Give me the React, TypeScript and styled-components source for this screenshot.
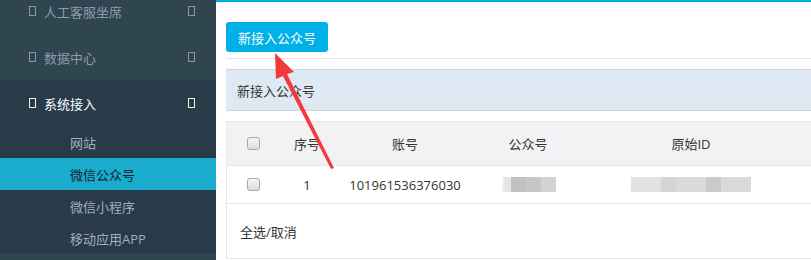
import React from 'react'
import styled, { createGlobalStyle } from 'styled-components'

const GlobalStyle = createGlobalStyle`
  html, body {
    margin: 0;
    padding: 0;
    background: #fff;
    overflow: hidden;
  }
  body {
    font-family: "Open Sans", "Noto Sans CJK SC", sans-serif;
    font-size: 13px;
    color: #333;
  }
`

const Layout = styled.div`
  display: flex;
  width: 811px;
  height: 260px;
  overflow: hidden;
  position: relative;
`

const Sidebar = styled.div`
  width: 216px;
  flex: none;
  background: #2f4550;
  overflow: hidden;
`

const Menu = styled.div`
  margin-top: -12px;
  display: flex;
  flex-direction: column;
`

const MenuItem = styled.div<{ $active?: boolean }>`
  height: 46px;
  display: flex;
  align-items: center;
  padding: 0 21px 0 29px;
  color: ${(p) => (p.$active ? '#ffffff' : '#8c9dab')};
  background: ${(p) => (p.$active ? '#293a48' : 'transparent')};
  font-size: 13px;
`

const Tofu = styled.span<{ $active?: boolean }>`
  display: inline-block;
  width: 5px;
  height: 8px;
  border: 1px solid ${(p) => (p.$active ? '#f2f2e0' : '#8a99a3')};
  flex: none;
`

const MenuLabel = styled.span`
  flex: 1;
  margin-left: 8px;
`

const SubMenu = styled.div`
  background: #293a48;
  display: flex;
  flex-direction: column;
  flex: 1;
`

const SubItem = styled.div<{ $selected?: boolean }>`
  height: 32px;
  display: flex;
  align-items: center;
  padding-left: 70px;
  font-size: 13px;
  color: ${(p) => (p.$selected ? '#0e2630' : '#a3afb9')};
  background: ${(p) => (p.$selected ? '#1babcd' : 'transparent')};
`

const Main = styled.div`
  flex: 1;
  border-top: 2px solid #00aee6;
  padding: 20px 0 0 10px;
  display: flex;
  flex-direction: column;
`

const Toolbar = styled.div`
  padding-bottom: 6px;
  border-bottom: 1px solid #e5e5e5;
`

const PrimaryButton = styled.button`
  height: 30px;
  width: 102px;
  border: none;
  border-radius: 3px;
  background: #00b1e8;
  color: #fff;
  font-family: inherit;
  font-size: 13px;
  padding: 0;
  cursor: pointer;
`

const PanelHeader = styled.div`
  margin-top: 10px;
  height: 40px;
  background: #dfe9f4;
  border-top: 1px solid #cfd4d9;
  border-bottom: 1px solid #cfd4d9;
  display: flex;
  align-items: center;
  padding-left: 11px;
  color: #333;
`

const Table = styled.div`
  margin-top: 10px;
  border: 1px solid #e6e6e6;
  border-right: none;
  display: flex;
  flex-direction: column;
`

const Row = styled.div<{ $head?: boolean; $h: number }>`
  display: flex;
  height: ${(p) => p.$h}px;
  align-items: center;
  background: ${(p) => (p.$head ? '#f2f2f5' : '#fff')};
  border-bottom: 1px solid #e6e6e6;
  color: #333;
`

const Cell = styled.div<{ $w: number }>`
  width: ${(p) => p.$w}px;
  flex: none;
  display: flex;
  justify-content: center;
  align-items: center;
`

const Footer = styled.div`
  height: 54px;
  display: flex;
  align-items: center;
  padding-left: 13px;
`

const Checkbox = styled.span`
  width: 11px;
  height: 11px;
  border: 1px solid #a9a9a9;
  border-radius: 3px;
  background: linear-gradient(#f6f6f6, #dcdcdc);
  display: inline-block;
`

const Blur = styled.div<{ $w: number; $stops: string }>`
  width: ${(p) => p.$w}px;
  height: 15px;
  background: ${(p) => p.$stops};
`

const Arrow = styled.svg`
  position: absolute;
  left: 262px;
  top: 50px;
  pointer-events: none;
`

const menuItems = [
  { label: '人工客服坐席' },
  { label: '数据中心' },
  { label: '系统接入', active: true },
]

const subItems = ['网站', '微信公众号', '微信小程序', '移动应用APP']

const widths = [52, 56, 140, 106, 220]

const App = () => {
  return (
    <Layout>
      <GlobalStyle />
      <Sidebar>
        <Menu>
          {menuItems.map((m) => (
            <MenuItem key={m.label} $active={m.active}>
              <Tofu $active={m.active} />
              <MenuLabel>{m.label}</MenuLabel>
              <Tofu $active={m.active} />
            </MenuItem>
          ))}
          <SubMenu>
            {subItems.map((s) => (
              <SubItem key={s} $selected={s === '微信公众号'}>
                {s}
              </SubItem>
            ))}
          </SubMenu>
        </Menu>
      </Sidebar>
      <Main>
        <Toolbar>
          <PrimaryButton>新接入公众号</PrimaryButton>
        </Toolbar>
        <PanelHeader>新接入公众号</PanelHeader>
        <Table>
          <Row $head $h={43}>
            <Cell $w={widths[0]}>
              <Checkbox />
            </Cell>
            <Cell $w={widths[1]}>序号</Cell>
            <Cell $w={widths[2]}>账号</Cell>
            <Cell $w={widths[3]}>公众号</Cell>
            <Cell $w={widths[4]}>原始ID</Cell>
          </Row>
          <Row $h={37}>
            <Cell $w={widths[0]}>
              <Checkbox />
            </Cell>
            <Cell $w={widths[1]}>1</Cell>
            <Cell $w={widths[2]}>101961536376030</Cell>
            <Cell $w={widths[3]}>
              <Blur
                $w={55}
                $stops="linear-gradient(90deg, #ffffff 0px, #e6e4e2 4px, #e6e4e2 10px, #c2c2c0 10px, #c2c2c0 25px, #c6c6c4 25px, #c6c6c4 40px, #d2d4d3 40px, #d2d4d3 55px)"
              />
            </Cell>
            <Cell $w={widths[4]}>
              <Blur
                $w={120}
                $stops="linear-gradient(90deg, #e2e2e2 0px, #e2e2e2 30px, #d4d4d4 30px, #d4d4d4 45px, #dadad8 45px, #dadad8 75px, #cacaca 75px, #cacaca 90px, #d9d9d9 90px, #d9d9d9 120px)"
              />
            </Cell>
          </Row>
          <Footer>全选/取消</Footer>
        </Table>
      </Main>
      <Arrow width="80" height="120" viewBox="0 0 80 120">
        <polygon points="13,3 32,22 25,24 72,118 69,119 21,26 14,29" fill="#f23a3a" />
      </Arrow>
    </Layout>
  )
}

export default App
